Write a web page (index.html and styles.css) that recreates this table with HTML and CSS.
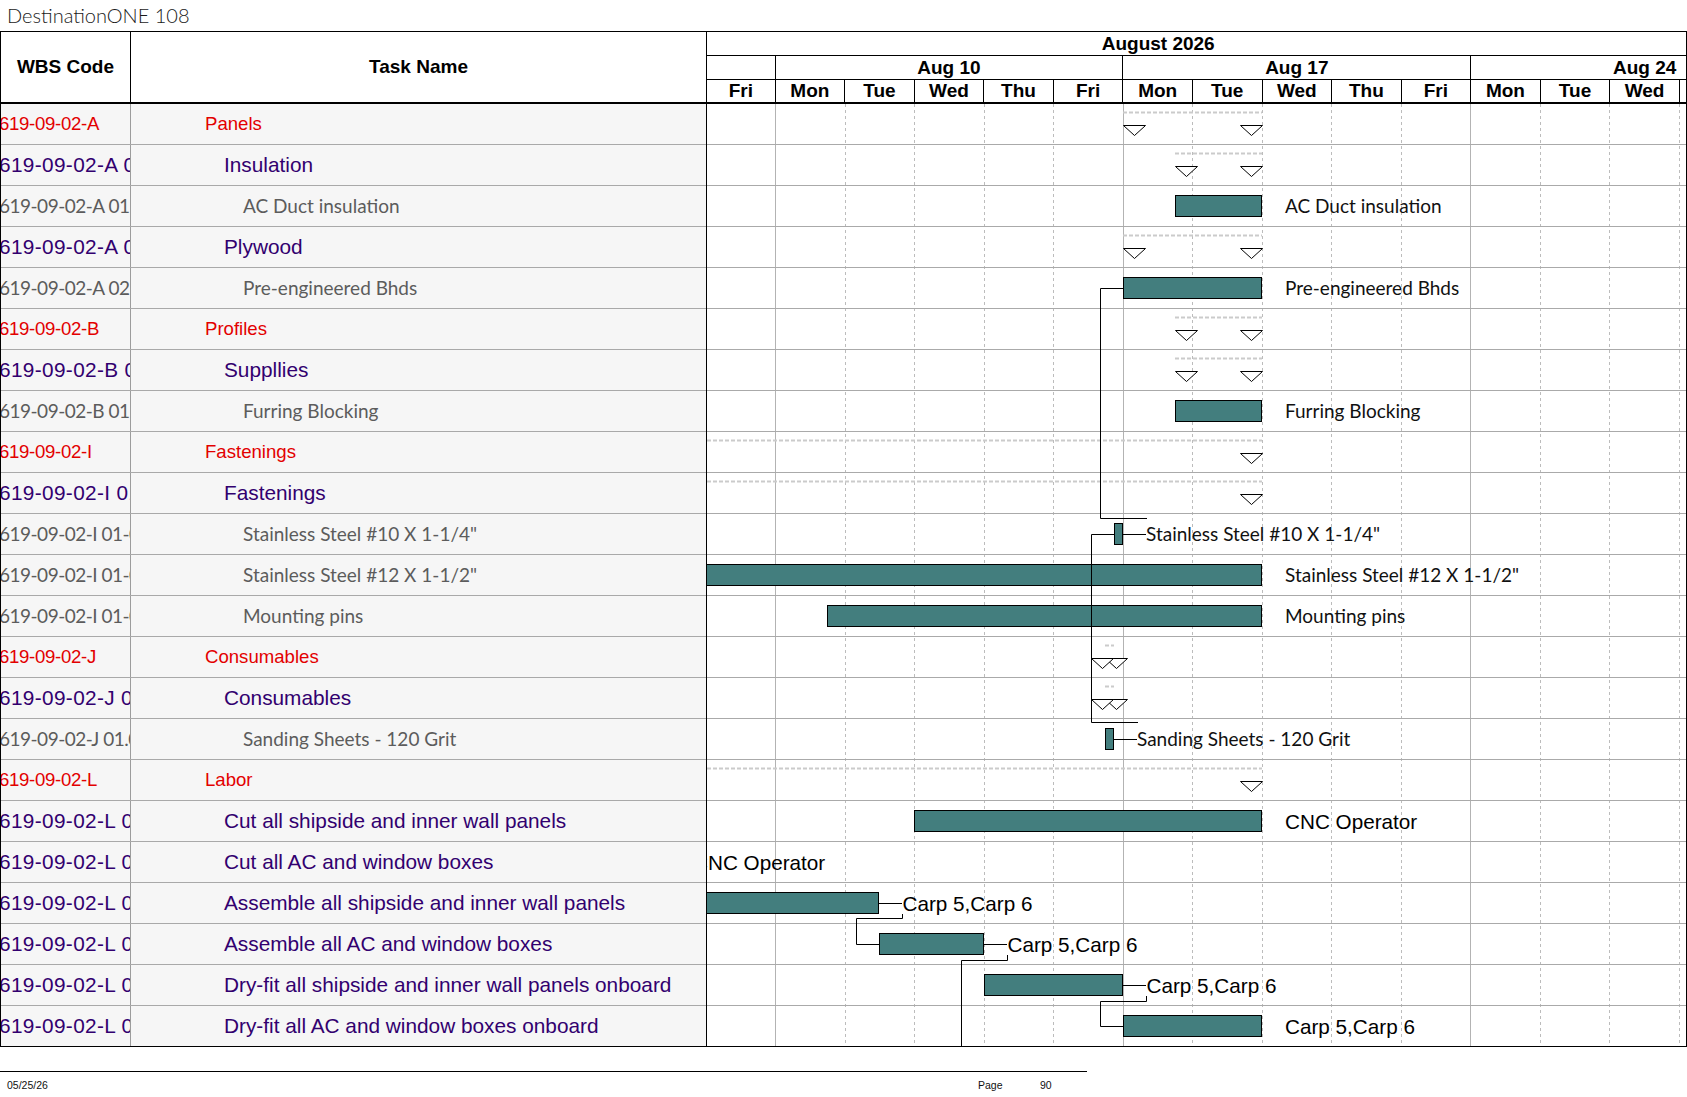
FILE: index.html
```html
<!DOCTYPE html>
<html>
<head>
<meta charset="utf-8">
<title>DestinationONE 108</title>
<link rel="stylesheet" href="styles.css">
</head>
<body>
<div class="title">DestinationONE 108</div>
<div class="sheet">
  <div class="grid">
    <div class="ghead">
      <div class="h-wbs">WBS Code</div>
      <div class="h-task">Task Name</div>
    </div>
    <div class="row l1"><div class="c-wbs"><span>619-09-02-A</span></div><div class="c-task">Panels</div></div>
    <div class="row l2"><div class="c-wbs"><span>619-09-02-A 01</span></div><div class="c-task">Insulation</div></div>
    <div class="row l3"><div class="c-wbs"><span>619-09-02-A 01.01</span></div><div class="c-task">AC Duct insulation</div></div>
    <div class="row l2"><div class="c-wbs"><span>619-09-02-A 02</span></div><div class="c-task">Plywood</div></div>
    <div class="row l3"><div class="c-wbs"><span>619-09-02-A 02.01</span></div><div class="c-task">Pre-engineered Bhds</div></div>
    <div class="row l1"><div class="c-wbs"><span>619-09-02-B</span></div><div class="c-task">Profiles</div></div>
    <div class="row l2"><div class="c-wbs"><span>619-09-02-B 01</span></div><div class="c-task">Suppllies</div></div>
    <div class="row l3"><div class="c-wbs"><span>619-09-02-B 01.01</span></div><div class="c-task">Furring Blocking</div></div>
    <div class="row l1"><div class="c-wbs"><span>619-09-02-I</span></div><div class="c-task">Fastenings</div></div>
    <div class="row l2"><div class="c-wbs"><span>619-09-02-I 01</span></div><div class="c-task">Fastenings</div></div>
    <div class="row l3"><div class="c-wbs"><span>619-09-02-I 01-01</span></div><div class="c-task">Stainless Steel #10 X 1-1/4"</div></div>
    <div class="row l3"><div class="c-wbs"><span>619-09-02-I 01-02</span></div><div class="c-task">Stainless Steel #12 X 1-1/2"</div></div>
    <div class="row l3"><div class="c-wbs"><span>619-09-02-I 01-03</span></div><div class="c-task">Mounting pins</div></div>
    <div class="row l1"><div class="c-wbs"><span>619-09-02-J</span></div><div class="c-task">Consumables</div></div>
    <div class="row l2"><div class="c-wbs"><span>619-09-02-J 01</span></div><div class="c-task">Consumables</div></div>
    <div class="row l3"><div class="c-wbs"><span>619-09-02-J 01.01</span></div><div class="c-task">Sanding Sheets - 120 Grit</div></div>
    <div class="row l1"><div class="c-wbs"><span>619-09-02-L</span></div><div class="c-task">Labor</div></div>
    <div class="row l2"><div class="c-wbs"><span>619-09-02-L 01</span></div><div class="c-task">Cut all shipside and inner wall panels</div></div>
    <div class="row l2"><div class="c-wbs"><span>619-09-02-L 02</span></div><div class="c-task">Cut all AC and window boxes</div></div>
    <div class="row l2"><div class="c-wbs"><span>619-09-02-L 03</span></div><div class="c-task">Assemble all shipside and inner wall panels</div></div>
    <div class="row l2"><div class="c-wbs"><span>619-09-02-L 04</span></div><div class="c-task">Assemble all AC and window boxes</div></div>
    <div class="row l2"><div class="c-wbs"><span>619-09-02-L 05</span></div><div class="c-task">Dry-fit all shipside and inner wall panels onboard</div></div>
    <div class="row l2 last"><div class="c-wbs"><span>619-09-02-L 06</span></div><div class="c-task">Dry-fit all AC and window boxes onboard</div></div>
  </div>
  <div class="chart">
    <div class="chead">
      <div class="mrow"><div class="month">August 2026</div></div>
      <div class="wrow">
        <div class="week">Aug 3</div>
        <div class="week">Aug 10</div>
        <div class="week">Aug 17</div>
        <div class="week">Aug 24</div>
      </div>
      <div class="drow">
        <div class="day first">Fri</div>
        <div class="day">Mon</div>
        <div class="day">Tue</div>
        <div class="day">Wed</div>
        <div class="day">Thu</div>
        <div class="day">Fri</div>
        <div class="day">Mon</div>
        <div class="day">Tue</div>
        <div class="day">Wed</div>
        <div class="day">Thu</div>
        <div class="day">Fri</div>
        <div class="day">Mon</div>
        <div class="day">Tue</div>
        <div class="day">Wed</div>
        <div class="day">Thu</div>
      </div>
    </div>
    <svg class="gantt" width="979" height="943" viewBox="707 104 979 943" xmlns="http://www.w3.org/2000/svg">
      <g class="gl-week">
        <line x1="775.5" y1="104" x2="775.5" y2="1047"/>
        <line x1="1123.5" y1="104" x2="1123.5" y2="1047"/>
        <line x1="1470.5" y1="104" x2="1470.5" y2="1047"/>
      </g>
      <g class="gl-day">
        <line x1="845.5" y1="104" x2="845.5" y2="1047"/>
        <line x1="914.5" y1="104" x2="914.5" y2="1047"/>
        <line x1="984.5" y1="104" x2="984.5" y2="1047"/>
        <line x1="1053.5" y1="104" x2="1053.5" y2="1047"/>
        <line x1="1192.5" y1="104" x2="1192.5" y2="1047"/>
        <line x1="1262.5" y1="104" x2="1262.5" y2="1047"/>
        <line x1="1331.5" y1="104" x2="1331.5" y2="1047"/>
        <line x1="1401.5" y1="104" x2="1401.5" y2="1047"/>
        <line x1="1540.5" y1="104" x2="1540.5" y2="1047"/>
        <line x1="1609.5" y1="104" x2="1609.5" y2="1047"/>
        <line x1="1679.5" y1="104" x2="1679.5" y2="1047"/>
      </g>
      <g class="rowline">
        <line x1="707" y1="144.5" x2="1686" y2="144.5"/>
        <line x1="707" y1="185.5" x2="1686" y2="185.5"/>
        <line x1="707" y1="226.5" x2="1686" y2="226.5"/>
        <line x1="707" y1="267.5" x2="1686" y2="267.5"/>
        <line x1="707" y1="308.5" x2="1686" y2="308.5"/>
        <line x1="707" y1="349.5" x2="1686" y2="349.5"/>
        <line x1="707" y1="390.5" x2="1686" y2="390.5"/>
        <line x1="707" y1="431.5" x2="1686" y2="431.5"/>
        <line x1="707" y1="472.5" x2="1686" y2="472.5"/>
        <line x1="707" y1="513.5" x2="1686" y2="513.5"/>
        <line x1="707" y1="554.5" x2="1686" y2="554.5"/>
        <line x1="707" y1="595.5" x2="1686" y2="595.5"/>
        <line x1="707" y1="636.5" x2="1686" y2="636.5"/>
        <line x1="707" y1="677.5" x2="1686" y2="677.5"/>
        <line x1="707" y1="718.5" x2="1686" y2="718.5"/>
        <line x1="707" y1="759.5" x2="1686" y2="759.5"/>
        <line x1="707" y1="800.5" x2="1686" y2="800.5"/>
        <line x1="707" y1="841.5" x2="1686" y2="841.5"/>
        <line x1="707" y1="882.5" x2="1686" y2="882.5"/>
        <line x1="707" y1="923.5" x2="1686" y2="923.5"/>
        <line x1="707" y1="964.5" x2="1686" y2="964.5"/>
        <line x1="707" y1="1005.5" x2="1686" y2="1005.5"/>
      </g>
      <line class="bottomline" x1="707" y1="1046.5" x2="1686" y2="1046.5"/>
      <g class="sumline">
        <line x1="1123" y1="112.5" x2="1262" y2="112.5"/>
        <line x1="1175" y1="153.5" x2="1262" y2="153.5"/>
        <line x1="1123" y1="235.5" x2="1262" y2="235.5"/>
        <line x1="1175" y1="317.5" x2="1262" y2="317.5"/>
        <line x1="1175" y1="358.5" x2="1262" y2="358.5"/>
        <line x1="707" y1="440.5" x2="1262" y2="440.5"/>
        <line x1="707" y1="481.5" x2="1262" y2="481.5"/>
        <line x1="1105" y1="645.5" x2="1114" y2="645.5"/>
        <line x1="1105" y1="686.5" x2="1114" y2="686.5"/>
        <line x1="707" y1="768.5" x2="1262" y2="768.5"/>
      </g>
      <g class="bar">
        <rect x="1175.5" y="195.5" width="86" height="21"/>
        <rect x="1123.5" y="277.5" width="138" height="21"/>
        <rect x="1175.5" y="400.5" width="86" height="21"/>
        <rect x="1114.5" y="523.5" width="8" height="21"/>
        <rect x="706.5" y="564.5" width="555" height="21"/>
        <rect x="827.5" y="605.5" width="434" height="21"/>
        <rect x="1105.5" y="728.5" width="8" height="21"/>
        <rect x="914.5" y="810.5" width="347" height="21"/>
        <rect x="706.5" y="892.5" width="172" height="21"/>
        <rect x="879.5" y="933.5" width="104" height="21"/>
        <rect x="984.5" y="974.5" width="138" height="21"/>
        <rect x="1123.5" y="1015.5" width="138" height="21"/>
      </g>
      <g class="link">
        <path d="M1123 288.5 H1100.5 V518.5 H1147"/>
        <path d="M1114 534.5 H1091.5 V722.5 H1138"/>
        <path d="M1123 534.5 H1146"/>
        <path d="M1114 739.5 H1137"/>
        <path d="M879 903.5 H902"/>
        <path d="M902.5 914 V918.5 H856.5 V944.5 H879"/>
        <path d="M984 944.5 H1007"/>
        <path d="M1007.5 955 V960.5 H961.5 V1047"/>
        <path d="M1123 985.5 H1146"/>
        <path d="M1146.5 996 V1001.5 H1100.5 V1026.5 H1123"/>
      </g>
      <g class="tri">
        <polygon points="1123.5,125.5 1145.5,125.5 1134.5,135.5"/>
        <polygon points="1240.5,125.5 1262.5,125.5 1251.5,135.5"/>
        <polygon points="1175.5,166.5 1197.5,166.5 1186.5,176.5"/>
        <polygon points="1240.5,166.5 1262.5,166.5 1251.5,176.5"/>
        <polygon points="1123.5,248.5 1145.5,248.5 1134.5,258.5"/>
        <polygon points="1240.5,248.5 1262.5,248.5 1251.5,258.5"/>
        <polygon points="1175.5,330.5 1197.5,330.5 1186.5,340.5"/>
        <polygon points="1240.5,330.5 1262.5,330.5 1251.5,340.5"/>
        <polygon points="1175.5,371.5 1197.5,371.5 1186.5,381.5"/>
        <polygon points="1240.5,371.5 1262.5,371.5 1251.5,381.5"/>
        <polygon points="1240.5,453.5 1262.5,453.5 1251.5,463.5"/>
        <polygon points="1240.5,494.5 1262.5,494.5 1251.5,504.5"/>
        <polygon points="1105.5,658.5 1127.5,658.5 1116.5,668.5"/>
        <polygon points="1091.5,658.5 1113.5,658.5 1102.5,668.5"/>
        <polygon points="1105.5,699.5 1127.5,699.5 1116.5,709.5"/>
        <polygon points="1091.5,699.5 1113.5,699.5 1102.5,709.5"/>
        <polygon points="1240.5,781.5 1262.5,781.5 1251.5,791.5"/>
      </g>
      <g class="lbl">
        <text x="1285" y="213">AC Duct insulation</text>
        <text x="1285" y="295">Pre-engineered Bhds</text>
        <text x="1285" y="418">Furring Blocking</text>
        <text x="1146" y="541">Stainless Steel #10 X 1-1/4"</text>
        <text x="1285" y="582">Stainless Steel #12 X 1-1/2"</text>
        <text x="1285" y="623">Mounting pins</text>
        <text x="1137" y="746">Sanding Sheets - 120 Grit</text>
      </g>
      <g class="lbl-a">
        <text x="1285" y="828.5">CNC Operator</text>
        <text x="693" y="869.5">CNC Operator</text>
        <text x="902.5" y="910.5">Carp 5,Carp 6</text>
        <text x="1007.5" y="951.5">Carp 5,Carp 6</text>
        <text x="1146.5" y="992.5">Carp 5,Carp 6</text>
        <text x="1285" y="1033.5">Carp 5,Carp 6</text>
      </g>
    </svg>
  </div>
</div>
<div class="footer">
  <span class="f-date">05/25/26</span>
  <span class="f-page">Page</span>
  <span class="f-num">90</span>
</div>
</body>
</html>
```
FILE: styles.css
```css
* { box-sizing: border-box; }
html, body { margin: 0; padding: 0; background: #fff; }
body {
  width: 1687px;
  height: 1097px;
  overflow: hidden;
  font-family: "Liberation Sans", Arial, sans-serif;
  color: #000;
}

.title {
  height: 31px;
  padding-left: 7px;
  font-family: Lato, "Liberation Sans", sans-serif;
  font-weight: 300;
  font-size: 20px;
  line-height: 31px;
  color: #1a1a1a;
  white-space: nowrap;
}

.sheet {
  display: flex;
  width: 1687px;
  border-top: 1px solid #000;
}

/* left table */
.grid {
  flex: none;
  width: 706px;
  border-left: 1px solid #000;
}
.ghead {
  display: flex;
  height: 72px;
  border-bottom: 2px solid #000;
  font-weight: bold;
  font-size: 19px;
}
.h-wbs {
  flex: none;
  width: 130px;
  border-right: 1px solid #000;
  display: flex;
  align-items: center;
  justify-content: center;
}
.h-task {
  flex: 1;
  display: flex;
  align-items: center;
  justify-content: center;
}
.row {
  display: flex;
  height: 41px;
  border-bottom: 1px solid #a9a9a9;
  background: #f6f6f6;
  white-space: nowrap;
}
.row.last { border-bottom-color: #000; }
.c-wbs {
  flex: none;
  width: 130px;
  border-right: 1px solid #9c9c9c;
  overflow: hidden;
  line-height: 40px;
}
.c-wbs span { margin-left: -2px; }
.c-task {
  flex: 1;
  overflow: hidden;
  line-height: 40px;
}

.l1 { color: #e30000; font-size: 18.6px; }
.l1 .c-wbs span { letter-spacing: -0.3px; }
.l1 .c-task { padding-left: 74px; }

.l2 { color: #32006f; font-size: 20.8px; }
.l2 .c-wbs span { letter-spacing: 0.35px; }
.l2 .c-task { padding-left: 93px; }

.l3 {
  color: #5c5c5c;
  font-family: Lato, "Liberation Sans", sans-serif;
  font-size: 19px;
}
.l3 .c-wbs span { letter-spacing: -0.5px; }
.l3 .c-task { padding-left: 112px; }

/* chart */
.chart {
  flex: none;
  width: 981px;
  border-left: 1px solid #000;
  border-right: 1px solid #000;
  overflow: hidden;
}
.chead {
  font-weight: bold;
  font-size: 19px;
}
.mrow, .wrow, .drow {
  display: flex;
  overflow: hidden;
  white-space: nowrap;
}
.mrow { height: 24px; border-bottom: 1px solid #000; line-height: 23px; }
.wrow { height: 24px; border-bottom: 1px solid #000; line-height: 23px; }
.drow { height: 24px; border-bottom: 2px solid #000; line-height: 22px; }
.month {
  flex: none;
  width: 1461px;
  margin-left: -279.3px;
  text-align: center;
}
.week {
  flex: none;
  width: 347.85px;
  border-right: 1px solid #000;
  text-align: center;
}
.week:first-child { margin-left: -279.3px; }
.day {
  flex: none;
  width: 69.57px;
  border-right: 1px solid #000;
  text-align: center;
}
.day.first { width: 68.57px; }

.gantt { display: block; }
.gl-week line { stroke: #b3b3b3; stroke-width: 1; }
.gl-day line { stroke: #bcbcbc; stroke-width: 1; stroke-dasharray: 3 3; }
.rowline line { stroke: #aaaaaa; stroke-width: 1; }
.bottomline { stroke: #000; stroke-width: 1; }
.sumline line { stroke: #cbcbcb; stroke-width: 2; stroke-dasharray: 4 2; }
.bar rect { fill: #437e7e; stroke: #000; stroke-width: 1; }
.link path { fill: none; stroke: #000; stroke-width: 1; }
.tri polygon { fill: #fff; stroke: #000; stroke-width: 1; }
.lbl text {
  font-family: Lato, "Liberation Sans", sans-serif;
  font-size: 19px;
  fill: #111;
}
.lbl-a text {
  font-family: "Liberation Sans", Arial, sans-serif;
  font-size: 20.7px;
  fill: #000;
}

/* footer */
.footer {
  display: flex;
  width: 1087px;
  margin-top: 24px;
  border-top: 1px solid #000;
  padding-top: 7px;
  font-size: 10.5px;
  line-height: 12px;
  color: #111;
}
.f-date { flex: none; width: 978px; padding-left: 7px; }
.f-page { flex: none; width: 62px; }
.f-num { flex: none; }
```
